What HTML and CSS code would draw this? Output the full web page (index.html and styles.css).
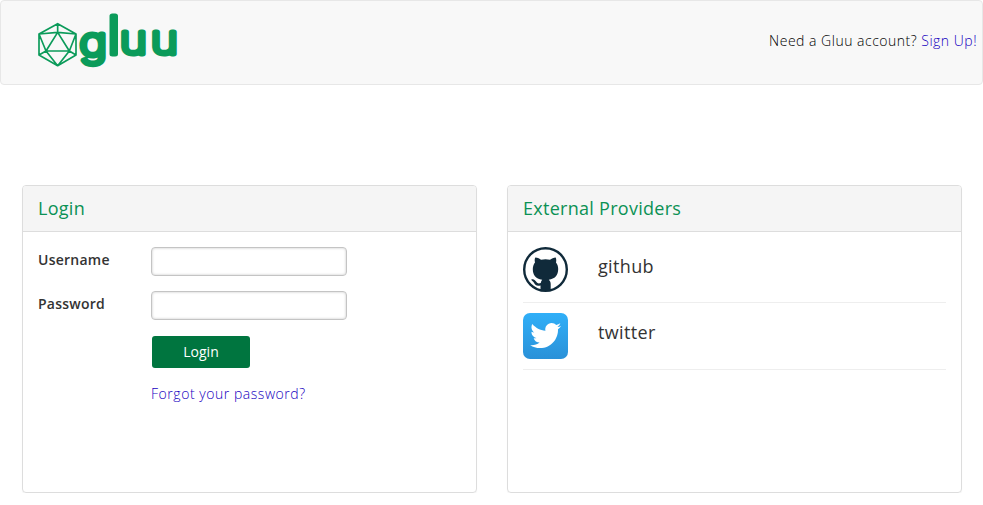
FILE: index.html
```html
<!DOCTYPE html>
<html lang="en">
<head>
<meta charset="utf-8">
<title>Gluu Login</title>
<link rel="stylesheet" href="styles.css">
</head>
<body>
<header class="navbar">
  <svg class="logo" viewBox="0 0 480 210" width="160" height="70" role="img" aria-label="gluu">
    <path class="mesh" d="M83 56 138 87V150L83 182 27 150V87ZM83 82 48 138H118ZM83 56V82M27 87 83 82 138 87M27 87 48 138 27 150M138 87 118 138 138 150M48 138 83 182 118 138"/>
    <text class="wordmark" transform="scale(1.16 1)" y="148"><tspan x="128" dy="4">g</tspan><tspan class="tall" x="199" dy="-4">l</tspan><tspan x="232">u</tspan><tspan x="312">u</tspan></text>
  </svg>
  <p class="signup">Need a Gluu account? <a href="#">Sign Up!</a></p>
</header>
<main class="panels">
  <section class="panel">
    <h1 class="panel-title">Login</h1>
    <form class="login-form">
      <label for="username">Username</label>
      <input id="username" type="text">
      <label for="password">Password</label>
      <input id="password" type="password">
      <button type="button">Login</button>
      <a class="forgot" href="#">Forgot your password?</a>
    </form>
  </section>
  <section class="panel">
    <h2 class="panel-title">External Providers</h2>
    <ul class="providers">
      <li>
        <svg viewBox="0 0 45 45" width="45" height="45">
          <circle cx="22.5" cy="22.5" r="21.3" fill="#fff" stroke="#102a3a" stroke-width="2.4"/>
          <path fill="#102a3a" d="M17.5 44V38.5C13 39.5 12 37.5 10.8 35.6 9.8 33.8 8 33.5 8.3 32.6 10.5 31.4 12.4 33.5 13.7 35.3 14.7 36.7 16.2 36.5 17.8 36 18 34.5 18.4 33.5 19.2 32.7 12.5 31.8 9.8 28 9.8 22 9.8 19.3 10.7 17 12 15.4 11.5 13.5 11.6 11.5 12.3 10.4 14.7 10.5 16.8 11.8 18 12.8Q22.5 11.8 27 12.8C28.5 11.7 30.7 10.5 32.7 10.4 33.4 12 33.4 14 33 15.4 34.5 17.2 35.2 19.3 35.2 22 35.2 28.5 31.8 31.8 25.8 32.7 27.2 34 27.7 35.2 27.7 37V44Z"/>
        </svg>
        <span>github</span>
      </li>
      <li>
        <svg viewBox="0 0 45 46" width="45" height="46">
          <defs><linearGradient id="sky" x2="0" y2="1"><stop stop-color="#30aff8"/><stop offset="1" stop-color="#2a91d8"/></linearGradient></defs>
          <rect width="45" height="46" rx="7" fill="url(#sky)"/>
          <path fill="#fff" transform="translate(7.2 7) scale(1.29)" d="M24 4.557c-.883.392-1.832.656-2.828.775 1.017-.609 1.798-1.574 2.165-2.724-.951.564-2.005.974-3.127 1.195-.897-.957-2.178-1.555-3.594-1.555-3.179 0-5.515 2.966-4.797 6.045-4.091-.205-7.719-2.165-10.148-5.144-1.29 2.213-.669 5.108 1.523 6.574-.806-.026-1.566-.247-2.229-.616-.054 2.281 1.581 4.415 3.949 4.89-.693.188-1.452.232-2.224.084.626 1.956 2.444 3.379 4.6 3.419-2.07 1.623-4.678 2.348-7.29 2.04 2.179 1.397 4.768 2.212 7.548 2.212 9.142 0 14.307-7.721 13.995-14.646.962-.695 1.797-1.562 2.457-2.549z"/>
        </svg>
        <span>twitter</span>
      </li>
    </ul>
  </section>
</main>
</body>
</html>
```

FILE: styles.css
```css
* { box-sizing: border-box; }
body {
  margin: 0;
  background: #fff;
  color: #333;
  font: 14px/20px "Open Sans", sans-serif;
  letter-spacing: .5px;
}
a { color: #1500c0; text-decoration: none; }
.navbar {
  display: flex;
  justify-content: space-between;
  height: 85px;
  padding: 4px 5px 0 29px;
  border: 1px solid #e7e7e7;
  border-radius: 4px;
  background: #f8f8f8;
}
.logo { overflow: visible; }
.mesh { fill: none; stroke: #0b9b5a; stroke-width: 5; stroke-linejoin: round; }
.wordmark {
  fill: #0b9b5a;
  stroke: #0b9b5a;
  stroke-width: 15;
  stroke-linejoin: round;
  font: 200 120px Inter, sans-serif;
  letter-spacing: 0;
}
.tall { font-size: 156px; }
.signup { margin: 26px 0 0; color: #000; font-weight: 300; }
.panels {
  display: grid;
  grid-template-columns: 455px 455px;
  gap: 30px;
  padding: 100px 22px 0;
}
.panel {
  height: 308px;
  border: 1px solid #ddd;
  border-radius: 4px;
  box-shadow: 0 1px 1px rgba(0,0,0,.05);
}
.panel-title {
  height: 46px;
  margin: 0;
  padding: 12px 15px;
  border-bottom: 1px solid #ddd;
  border-radius: 3px 3px 0 0;
  background: #f5f5f5;
  color: #0b9154;
  font-size: 18px;
  font-weight: 400;
  line-height: 21px;
  letter-spacing: .28px;
}
.login-form {
  display: grid;
  grid-template-columns: 113px 196px;
  grid-template-rows: 29px 29px 32px 20px;
  row-gap: 15px;
  padding: 15px;
}
.login-form label { padding-top: 3px; font-weight: 600; letter-spacing: .25px; }
.login-form input {
  width: 196px;
  height: 29px;
  border: 1px solid #c4c4c4;
  border-radius: 4px;
  box-shadow: inset 0 0 2px 1px #e4e4e4;
}
.login-form button {
  grid-column: 2;
  width: 98px;
  height: 32px;
  margin: 1px 0 0 1px;
  padding: 0;
  border: 0;
  border-radius: 3px;
  background: #00753f;
  color: #fff;
  font: 14px/20px "Open Sans", sans-serif;
}
.forgot { grid-column: 2; padding-top: 2px; font-weight: 300; letter-spacing: .54px; }
.providers { margin: 0; padding: 15px 15px 0; list-style: none; }
.providers li {
  display: flex;
  gap: 30px;
  height: 56px;
  border-bottom: 1px solid #eee;
  font-size: 18px;
  letter-spacing: .35px;
}
.providers li + li { height: 67px; padding-top: 10px; }
.providers span { padding-top: 9px; }
```
